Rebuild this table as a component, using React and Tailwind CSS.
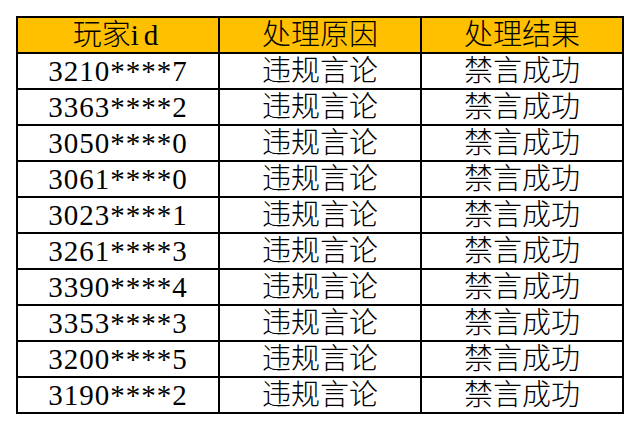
import React from "react"

const rows = [
  ["3210****7", "违规言论", "禁言成功"],
  ["3363****2", "违规言论", "禁言成功"],
  ["3050****0", "违规言论", "禁言成功"],
  ["3061****0", "违规言论", "禁言成功"],
  ["3023****1", "违规言论", "禁言成功"],
  ["3261****3", "违规言论", "禁言成功"],
  ["3390****4", "违规言论", "禁言成功"],
  ["3353****3", "违规言论", "禁言成功"],
  ["3200****5", "违规言论", "禁言成功"],
  ["3190****2", "违规言论", "禁言成功"],
]

const font = { fontFamily: '"Liberation Serif", "Noto Sans CJK SC", serif' }

export default function App() {
  return (
    <div className="w-[638px] h-[428px] bg-white pt-[16px] pl-[16px]" style={font}>
      <table className="border-collapse border-2 border-black text-black text-[29px] leading-none font-light">
        <thead>
          <tr className="h-[36px] bg-[#ffc000]">
            <th className="w-[202px] border-2 border-black font-light p-0">
              玩家<span className="tracking-[5px]">id</span>
            </th>
            <th className="w-[202px] border-2 border-black font-light p-0">处理原因</th>
            <th className="w-[202px] border-2 border-black font-light p-0">处理结果</th>
          </tr>
        </thead>
        <tbody>
          {rows.map((r, i) => (
            <tr key={i} className="h-[36px]">
              <td className="border-2 border-black text-center p-0 tracking-[1px]">{r[0]}</td>
              <td className="border-2 border-black text-center p-0">{r[1]}</td>
              <td className="border-2 border-black text-center p-0">{r[2]}</td>
            </tr>
          ))}
        </tbody>
      </table>
    </div>
  )
}
